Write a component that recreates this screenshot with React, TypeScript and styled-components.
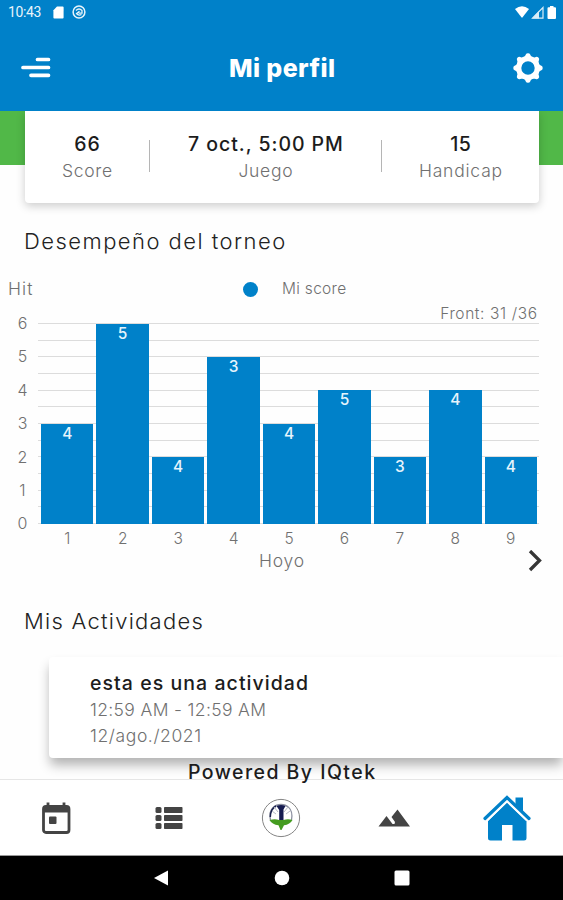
import React from "react";
import styled, { createGlobalStyle } from "styled-components";

const BLUE = "#0081c9";

const GlobalStyle = createGlobalStyle`
  * { box-sizing: border-box; }
  body { margin: 0; background: #fff; }
`;

const Screen = styled.div`
  width: 563px;
  height: 900px;
  display: flex;
  flex-direction: column;
  overflow: hidden;
  background: #fefefe;
  font-family: Inter, "Noto Sans", sans-serif;
  color: #222;
`;

const Text = styled.span<{ $size: number; $track?: number; $weight?: number; $color?: string; $line?: number }>`
  font-size: ${(p) => p.$size}px;
  line-height: ${(p) => p.$line ?? 26}px;
  letter-spacing: ${(p) => p.$track ?? 0}px;
  margin-right: ${(p) => -(p.$track ?? 0)}px;
  font-weight: ${(p) => p.$weight ?? 400};
  color: ${(p) => p.$color ?? "#707070"};
  white-space: nowrap;
`;

const Header = styled.header`
  flex: none;
  height: 111px;
  background: ${BLUE};
`;

const StatusBar = styled.div`
  height: 24px;
  padding: 0 6px 0 8px;
  display: flex;
  align-items: center;
  svg { display: block; }
`;

const Clock = styled.span`
  font: 400 14px/24px Roboto, sans-serif;
  color: #e8f4fb;
  letter-spacing: -0.4px;
  width: 33px;
  white-space: nowrap;
`;

const StatusGroup = styled.div<{ $gap: number; $start?: number }>`
  display: flex;
  align-items: center;
  gap: ${(p) => p.$gap}px;
  margin-left: ${(p) => (p.$start === undefined ? "auto" : p.$start + "px")};
`;

const TitleBar = styled.div`
  height: 87px;
  padding: 0 20px 0 21px;
  display: grid;
  grid-template-columns: 30px 1fr 30px;
  align-items: center;
  justify-items: center;
  svg { display: block; }
`;

const Main = styled.main`
  height: 668px;
  flex: none;
  display: flex;
  flex-direction: column;
`;

const GreenBand = styled.section`
  flex: none;
  height: 54px;
  padding: 0 24px 0 25px;
  background: #51b848;
`;

const SummaryCard = styled.div`
  height: 92px;
  padding-top: 20px;
  display: grid;
  grid-template-columns: 124px 1px 231px 1px 157px;
  background: #fff;
  border-radius: 0 0 4px 4px;
  box-shadow: 0 3px 10px rgba(0, 0, 0, 0.2);
  clip-path: inset(0 -20px -20px -20px);
`;

const Stat = styled.div`
  display: flex;
  flex-direction: column;
  align-items: center;
`;

const Divider = styled.i`
  height: 32px;
  margin-top: 9px;
  background: #b5b5b5;
`;

const SectionTitle = styled.h2<{ $top: number; $track: number }>`
  flex: none;
  margin: ${(p) => p.$top}px 0 0 24px;
  font-size: 22px;
  font-weight: 300;
  line-height: 30px;
  letter-spacing: ${(p) => p.$track}px;
`;

const Legend = styled.div`
  flex: none;
  height: 26px;
  margin-top: 20px;
  padding-left: 8px;
  display: grid;
  grid-template-columns: 235px 39px 1fr;
  align-items: center;
`;

const Dot = styled.i`
  width: 15px;
  height: 15px;
  border-radius: 50%;
  background: ${BLUE};
`;

const FrontTotal = styled.div`
  flex: none;
  height: 21px;
  padding-right: 26px;
  display: flex;
  justify-content: flex-end;
`;

const Chart = styled.div`
  flex: none;
  height: 201px;
  display: grid;
  grid-template-columns: 38px 501px;
`;

const YAxis = styled.div`
  display: flex;
  flex-direction: column;
  align-items: center;
  margin-top: -16px;
  padding-left: 7px;
`;

const Plot = styled.div`
  height: 201px;
  padding: 0 2px 0 3px;
  display: grid;
  grid-template-columns: repeat(9, 1fr);
  column-gap: 3px;
  align-items: end;
  background: repeating-linear-gradient(to bottom, #dcdcdc 0, #dcdcdc 1px, transparent 1px, transparent 16.67px);
`;

const Bar = styled.div<{ $value: number }>`
  height: ${(p) => p.$value * 33.4}px;
  background: ${BLUE};
  display: flex;
  justify-content: center;
`;

const XAxis = styled.div`
  flex: none;
  height: 26px;
  padding: 0 26px 0 41px;
  display: grid;
  grid-template-columns: repeat(9, 1fr);
  column-gap: 3px;
  justify-items: center;
`;

const AxisFooter = styled.div`
  flex: none;
  height: 22px;
  padding-right: 20px;
  display: grid;
  grid-template-columns: 259px 1fr 16px;
  align-items: center;
  svg { display: block; }
`;

const ActivityCard = styled.article`
  flex: none;
  height: 101px;
  margin: 21px 0 0 49px;
  padding: 13px 0 0 41px;
  display: flex;
  flex-direction: column;
  background: #fff;
  border-radius: 4px 0 0 4px;
  box-shadow: 0 8px 12px -1px rgba(0, 0, 0, 0.3);
`;

const Powered = styled.footer`
  position: relative;
  z-index: 1;
  text-align: center;
  height: 26px;
  margin-top: 1px;
`;

const BottomNav = styled.nav`
  flex: none;
  height: 77px;
  border-top: 1px solid #e6e6e6;
  border-bottom: 1px solid #999;
  background: #fff;
  display: grid;
  grid-template-columns: repeat(5, 112.6px);
  align-items: center;
  justify-items: center;
  svg { display: block; }
`;

const SystemBar = styled.div`
  flex: none;
  height: 44px;
  background: #000;
  display: grid;
  grid-template-columns: repeat(3, 120.5px);
  justify-content: center;
  justify-items: center;
  align-items: center;
  svg { display: block; }
`;

const holes = [
  { value: 3, label: "4" },
  { value: 6, label: "5" },
  { value: 2, label: "4" },
  { value: 5, label: "3" },
  { value: 3, label: "4" },
  { value: 4, label: "5" },
  { value: 2, label: "3" },
  { value: 4, label: "4" },
  { value: 2, label: "4" },
];

const GEAR_TEETH = [0, 45, 90, 135, 180, 225, 270, 315];

const GearIcon = () => (
  <svg width="30" height="30" viewBox="-15 -15 30 30" fill="#fff">
    <circle r="9.300" fill="none" stroke="#fff" strokeWidth="5.200" />
    {GEAR_TEETH.map((a) => (
      <path key={a} d="M-5-10C-3.500-11-2.800-12-2.200-13.400Q-1.700-14.700 0-14.700T2.200-13.400C2.800-12 3.500-11 5-10Z" transform={`rotate(${a})`} />
    ))}
  </svg>
);

const ClubLogo = () => (
  <svg width="40" height="40" viewBox="0 0 40 40">
    <circle cx="20" cy="20" r="18.600" fill="#fff" stroke="#858585" strokeWidth="1" />
    <path d="M9.500 22C6.500 9 16 6.500 20 6.500S33 9 30.500 22" fill="none" stroke="#8b8f9f" strokeWidth="1.300" />
    <path d="M9.300 19Q9.500 11 15 8" fill="none" stroke="#18204d" strokeWidth="1.500" />
    <path d="M13 9l4 5M27 9l-4 5M11 13l4 3M29 13l-4 3" stroke="#b4b8c4" strokeWidth="1" />
    <path d="M15.500 8Q20 6 24.500 8L22.500 11.500V22H18.200V12Z" fill="#151b50" />
    <path d="M8.500 22Q14 20.500 18 22H22.500Q27 20.500 31.500 22Q29 26.500 23 27.300L20.500 32H19.500L17.500 27.300Q11 26.500 8.500 22Z" fill="#459c20" />
  </svg>
);

export default function App() {
  return (
    <>
      <GlobalStyle />
      <Screen>
        <Header>
          <StatusBar>
            <Clock>10:43</Clock>
            <StatusGroup $gap={8} $start={12}>
              <svg width="11" height="13" viewBox="0 0 11 13"><path d="M4 .5H9.700Q10.600.5 10.600 1.500V11.500Q10.600 12.500 9.600 12.500H1.300Q.4 12.500.4 11.500V4.200Z" fill="#fff" /></svg>
              <svg width="14" height="14" viewBox="0 0 14 14" fill="none" stroke="#e8f4fb">
                <circle cx="7" cy="7" r="5.900" strokeWidth="1.500" />
                <path d="M4 5.500Q7 2.500 10 5.500V8.200H6.500M9.500 9.500Q6.500 11 4.500 8.500L7.500 6.200" strokeWidth="1.300" />
              </svg>
            </StatusGroup>
            <StatusGroup $gap={2}>
              <svg width="14" height="12" viewBox="0 0 14 12"><path d="M0 3Q7-2.400 14 3L7.600 11.300Q7 12 6.400 11.300Z" fill="#fff" /></svg>
              <svg width="13" height="13" viewBox="0 0 13 13"><path d="M1.500 12.200L12 1.500V12.200Z" fill="none" stroke="#d9edf8" strokeWidth="1.200" /><path d="M1 12.500L8 5V12.500Z" fill="#d9edf8" /></svg>
              <svg width="11" height="13" viewBox="0 0 11 13"><path d="M4 0H7.500V1.300H9Q10 1.300 10 2.300V12Q10 13 9 13H2.500Q1.500 13 1.500 12V2.300Q1.500 1.300 2.500 1.300H4Z" fill="#fff" /></svg>
            </StatusGroup>
          </StatusBar>
          <TitleBar>
            <svg width="30" height="22" viewBox="0 0 30 22" stroke="#fff" strokeWidth="3.700" strokeLinecap="round">
              <path d="M16.500 2.500H27.500M2 10.500H27.500M10 18.300H27.500" />
            </svg>
            <Text $size={25} $weight={800} $color="#fff" $line={32} $track={0.4}>Mi perfil</Text>
            <GearIcon />
          </TitleBar>
        </Header>

        <Main>
          <GreenBand>
            <SummaryCard>
              <Stat>
                <Text $size={19.5} $weight={500} $color="#1c1c1c" $track={0.8}>66</Text>
                <Text $size={17.5} $weight={300} $track={0.7} $line={28}>Score</Text>
              </Stat>
              <Divider />
              <Stat>
                <Text $size={19.5} $weight={500} $color="#1c1c1c" $track={0.95}>7 oct., 5:00 PM</Text>
                <Text $size={17.5} $weight={300} $track={0.7} $line={28}>Juego</Text>
              </Stat>
              <Divider />
              <Stat>
                <Text $size={19.5} $weight={500} $color="#1c1c1c" $track={0.4}>15</Text>
                <Text $size={17.5} $weight={300} $track={0.8} $line={28}>Handicap</Text>
              </Stat>
            </SummaryCard>
          </GreenBand>

          <SectionTitle $top={61} $track={1.45}>Desempeño del torneo</SectionTitle>
          <Legend>
            <Text $size={17.5} $weight={300} $track={1.1}>Hit</Text>
            <Dot />
            <Text $size={15.5} $weight={300} $track={0.3}>Mi score</Text>
          </Legend>
          <FrontTotal>
            <Text $size={15.5} $weight={300} $line={23} $track={0.6}>Front: 31 /36</Text>
          </FrontTotal>
          <Chart>
            <YAxis>
              {[6, 5, 4, 3, 2, 1, 0].map((n) => (
                <Text key={n} $size={16} $weight={300} $line={33.4}>{n}</Text>
              ))}
            </YAxis>
            <Plot>
              {holes.map((h, i) => (
                <Bar key={i} $value={h.value}>
                  <Text $size={15.5} $weight={500} $color="#e6f4fc" $line={19}>{h.label}</Text>
                </Bar>
              ))}
            </Plot>
          </Chart>
          <XAxis>
            {holes.map((_, i) => (
              <Text key={i} $size={15.5} $weight={300} $line={30}>{i + 1}</Text>
            ))}
          </XAxis>
          <AxisFooter>
            <i />
            <Text $size={17.5} $weight={300} $line={22} $track={0.8}>Hoyo</Text>
            <svg width="16" height="22" viewBox="0 0 16 22"><path d="M3 1L12.500 10.500L3 20" fill="none" stroke="#363636" strokeWidth="3.300" /></svg>
          </AxisFooter>

          <SectionTitle $top={34} $track={1.25}>Mis Actividades</SectionTitle>
          <ActivityCard>
            <Text $size={19.5} $weight={500} $color="#1c1c1c" $track={1.05}>esta es una actividad</Text>
            <Text $size={17.5} $weight={300} $line={27} $track={0.35}>12:59 AM - 12:59 AM</Text>
            <Text $size={17.5} $weight={300} $line={26} $track={0.6}>12/ago./2021</Text>
          </ActivityCard>
          <Powered>
            <Text $size={19.5} $weight={500} $color="#1c1c1c" $track={1.45}>Powered By IQtek</Text>
          </Powered>
        </Main>

        <BottomNav>
          <svg width="30" height="34" viewBox="0 0 30 34">
            <path d="M7 1.500V5M23 1.500V5" stroke="#444" strokeWidth="2.800" />
            <rect x="2.500" y="5.500" width="25.500" height="26" rx="2.500" fill="none" stroke="#444" strokeWidth="2.800" />
            <path d="M2 5H28V11.500H2Z" fill="#444" />
            <rect x="8" y="15.500" width="7.500" height="7.500" rx="1" fill="#444" />
          </svg>
          <svg width="28" height="24" viewBox="0 0 28 24" fill="#444">
            {[1, 9, 17].map((y) => (
              <g key={y}><rect x=".5" y={y} width="6" height="6" rx="1.500" /><rect x="9" y={y} width="18.500" height="6" rx=".7" /></g>
            ))}
          </svg>
          <ClubLogo />
          <svg width="32" height="20" viewBox="0 0 32 20"><path d="M.5 18.500L8.500 8L14.500 16H16.500L17 14L13.500 9L19.500 1.500L32 18.500Z" fill="#444" /></svg>
          <svg width="48" height="46" viewBox="0 0 48 46" fill={BLUE}>
            <path d="M32.500 2.500H40V17.500L32.500 10Z" />
            <path d="M2 23.500L24 2.500L46 23.500" fill="none" stroke={BLUE} strokeWidth="3.200" strokeLinecap="round" />
            <path d="M24 7.500L43.500 26V43Q43.500 45.500 41 45.500H29.500V30H19V45.500H7.500Q5 45.500 5 43V26Z" />
            <path d="M4.500 25.500L24 6.800L43.500 25.500" fill="none" stroke="#fff" strokeWidth="1.300" />
          </svg>
        </BottomNav>
        <SystemBar>
          <svg width="16" height="18" viewBox="0 0 16 18"><path d="M15 1.500V16.500L1 9Z" fill="#fff" /></svg>
          <svg width="16" height="16" viewBox="0 0 16 16"><circle cx="8" cy="8" r="7.300" fill="#fff" /></svg>
          <svg width="16" height="16" viewBox="0 0 16 16"><rect x=".5" y=".5" width="15" height="15" rx="1.500" fill="#fff" /></svg>
        </SystemBar>
      </Screen>
    </>
  );
}
